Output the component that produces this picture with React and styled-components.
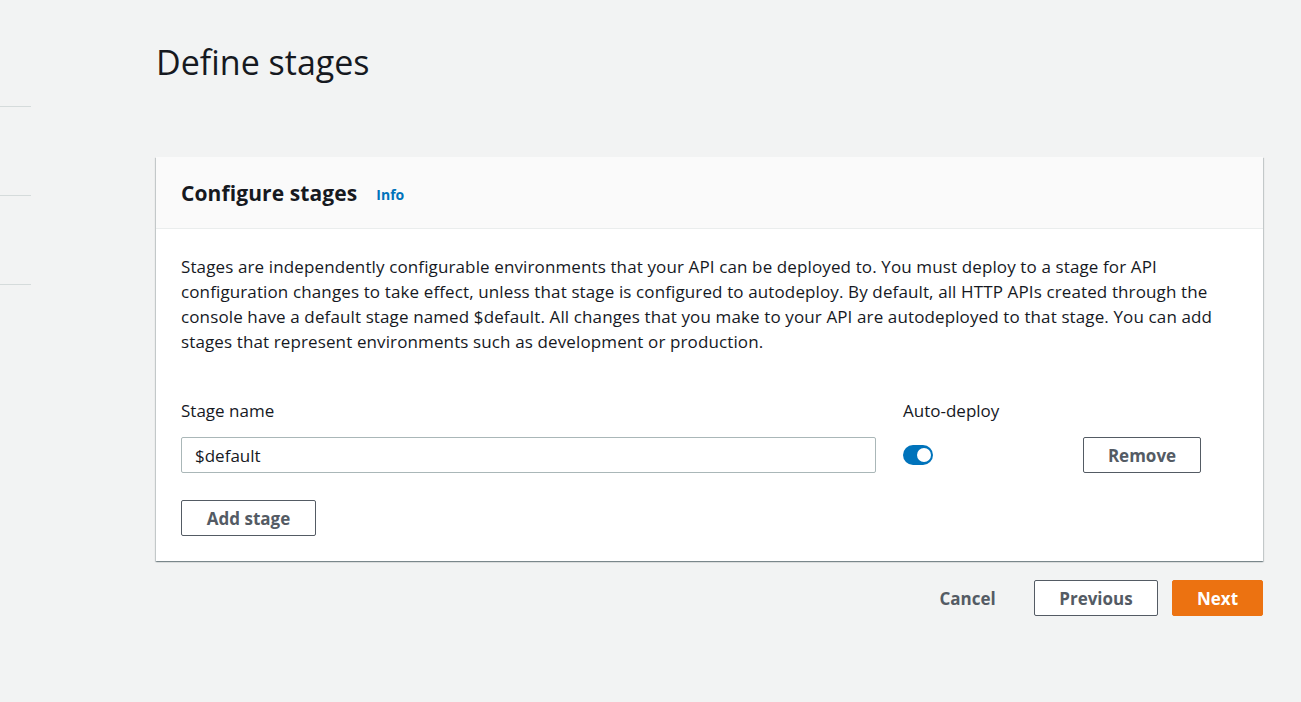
import React from 'react'
import styled, { createGlobalStyle } from 'styled-components'

const GlobalStyle = createGlobalStyle`
  body {
    margin: 0;
    background: #f2f3f3;
    font-family: 'Open Sans', 'Noto Sans', sans-serif;
    color: #16191f;
  }
`

const Page = styled.div`
  display: flex;
  min-height: 702px;
`

const SideNav = styled.nav`
  width: 31px;
  flex-shrink: 0;
  display: flex;
  flex-direction: column;
`

const NavBlock = styled.div`
  height: ${p => p.h}px;
  border-bottom: 1px solid #d5dbdb;
`

const Main = styled.main`
  flex: 1;
  padding: 42px 38px 40px 125px;
`

const Title = styled.h1`
  margin: 0 0 75px;
  font-size: 34px;
  line-height: 40px;
  font-weight: 400;
`

const Card = styled.section`
  background: #fff;
  box-shadow: 0 1px 1px 0 rgba(0, 28, 36, 0.3), 1px 1px 1px 0 rgba(0, 28, 36, 0.15),
    -1px 1px 1px 0 rgba(0, 28, 36, 0.15);
`

const CardHeader = styled.header`
  height: 72px;
  box-sizing: border-box;
  padding: 0 25px;
  background: #fafafa;
  border-bottom: 1px solid #eaeded;
  display: flex;
  align-items: center;
  gap: 19px;
`

const CardTitle = styled.h2`
  margin: 0;
  font-size: 21px;
  font-weight: 700;
  letter-spacing: 0.1px;
`

const InfoLink = styled.a`
  font-size: 14px;
  font-weight: 700;
  color: #0073bb;
  text-decoration: none;
  margin-top: 3px;
`

const CardBody = styled.div`
  padding: 25px 25px 25px;
`

const Description = styled.p`
  margin: 0 0 46px;
  font-size: 17px;
  line-height: 25px;
  letter-spacing: 0.12px;
`

const StageGrid = styled.div`
  display: grid;
  grid-template-columns: 695px 153px 118px;
  column-gap: 27px;
  row-gap: 15px;
  align-items: center;
`

const Label = styled.label`
  font-size: 17px;
  line-height: 22px;
`

const TextInput = styled.input`
  box-sizing: border-box;
  height: 36px;
  width: 100%;
  padding: 0 13px;
  border: 1px solid #aab7b8;
  border-radius: 2px;
  font: inherit;
  font-size: 17px;
  color: #16191f;
  outline: none;
`

const Toggle = styled.span`
  position: relative;
  display: inline-block;
  width: 30px;
  height: 20px;
  border-radius: 10px;
  background: #0073bb;

  &::after {
    content: '';
    position: absolute;
    top: 3px;
    right: 2px;
    width: 14px;
    height: 14px;
    border-radius: 50%;
    background: #fff;
  }
`

const Button = styled.button`
  box-sizing: border-box;
  width: ${p => p.w}px;
  height: 36px;
  padding: 0;
  border-radius: 2px;
  border: 1px solid ${p => (p.primary ? '#ec7211' : p.plain ? 'transparent' : '#545b64')};
  background: ${p => (p.primary ? '#ec7211' : p.plain ? 'transparent' : '#fff')};
  color: ${p => (p.primary ? '#fff' : '#545b64')};
  font-family: inherit;
  font-size: 17px;
  font-weight: 700;
  cursor: pointer;
`

const AddRow = styled.div`
  margin-top: 27px;
`

const Actions = styled.div`
  display: flex;
  justify-content: flex-end;
  align-items: center;
  gap: 14px;
  margin-top: 19px;
`

const App = () => {
  return (
    <Page>
      <GlobalStyle />
      <SideNav>
        <NavBlock h={106} />
        <NavBlock h={88} />
        <NavBlock h={88} />
      </SideNav>
      <Main>
        <Title>Define stages</Title>
        <Card>
          <CardHeader>
            <CardTitle>Configure stages</CardTitle>
            <InfoLink href="#">Info</InfoLink>
          </CardHeader>
          <CardBody>
            <Description>
              Stages are independently configurable environments that your API can be deployed to. You must deploy to a stage for API configuration changes to take effect, unless that stage is configured to autodeploy. By default, all HTTP APIs created through the console have a default stage named $default. All changes that you make to your API are autodeployed to that stage. You can add stages that represent environments such as development or production.
            </Description>
            <StageGrid>
              <Label>Stage name</Label>
              <Label>Auto-deploy</Label>
              <span />
              <TextInput defaultValue="$default" />
              <Toggle />
              <Button w={118}>Remove</Button>
            </StageGrid>
            <AddRow>
              <Button w={135}>Add stage</Button>
            </AddRow>
          </CardBody>
        </Card>
        <Actions>
          <Button plain w={105}>Cancel</Button>
          <Button w={124}>Previous</Button>
          <Button primary w={91}>Next</Button>
        </Actions>
      </Main>
    </Page>
  )
}

export default App
